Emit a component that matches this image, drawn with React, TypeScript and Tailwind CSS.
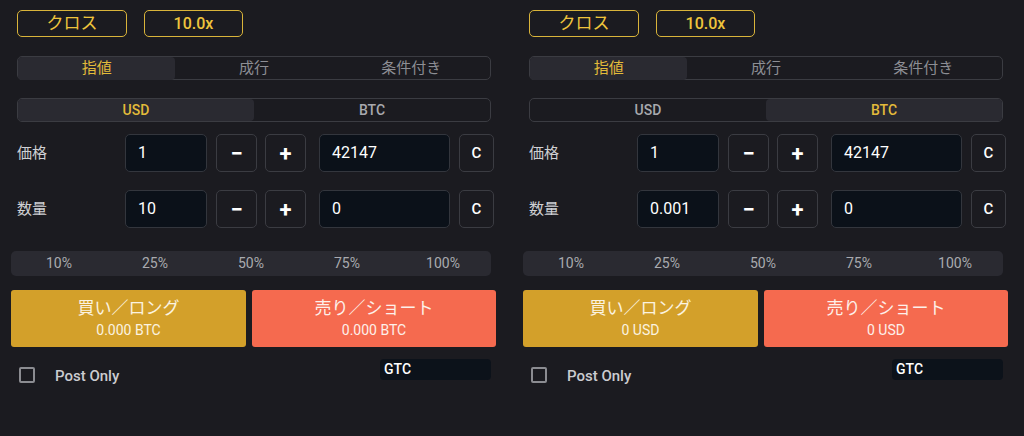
import React from "react";

const font = { fontFamily: '"Roboto", "Noto Sans CJK JP", sans-serif' };

type PanelProps = {
  currency: "USD" | "BTC";
  qty: string;
  amount: string;
};

const Box = ({ children, className = "" }: { children: React.ReactNode; className?: string }) => (
  <div className={`flex items-center justify-center rounded-[5px] border border-[#3b3c42] bg-[#1b1b20] text-white ${className}`}>
    {children}
  </div>
);

const Field = ({ value, className = "" }: { value: string; className?: string }) => (
  <div className={`flex h-[38px] items-center rounded-[5px] border border-[#33363d] bg-[#0b1119] pl-3 text-[16px] text-white ${className}`}>
    {value}
  </div>
);

const InputRow = ({ label, value, right }: { label: string; value: string; right: string }) => (
  <div className="flex h-[38px] items-center">
    <span className="w-[108px] text-[15px] text-[#cfd0d4]">{label}</span>
    <Field value={value} className="w-[82px]" />
    <Box className="ml-[9px] h-[38px] w-[41px] text-[22px] font-bold">−</Box>
    <Box className="ml-[8px] h-[38px] w-[41px] text-[22px] font-bold">+</Box>
    <Field value={right} className="ml-[13px] w-[131px]" />
    <Box className="ml-[9px] h-[38px] w-[35px] text-[15px] font-medium">C</Box>
  </div>
);

const Panel = ({ currency, qty, amount }: PanelProps) => (
  <div className="flex w-[512px] flex-col pt-[10px]">
    <div className="flex gap-[17px] pl-[17px]">
      <div className="flex h-[27px] w-[110px] items-center justify-center rounded-[5px] border-[1.5px] border-[#d9b43a] text-[17px] text-[#eec43c]">
        クロス
      </div>
      <div className="flex h-[27px] w-[99px] items-center justify-center rounded-[5px] border-[1.5px] border-[#d9b43a] text-[16px] font-medium text-[#eec43c]">
        10.0x
      </div>
    </div>

    <div className="ml-[17px] mt-[19px] grid h-[24px] w-[474px] grid-cols-3 rounded-[5px] border border-[#3b3c42] text-[15px]">
      <div className="flex items-center justify-center rounded-[4px] bg-[#2a2a31] text-[#e3bb3a]">指値</div>
      <div className="flex items-center justify-center text-[#8d8e94]">成行</div>
      <div className="flex items-center justify-center text-[#8d8e94]">条件付き</div>
    </div>

    <div className="ml-[17px] mt-[18px] grid h-[24px] w-[474px] grid-cols-2 rounded-[5px] border border-[#3b3c42] text-[14px] font-medium">
      <div className={`flex items-center justify-center rounded-[4px] ${currency === "USD" ? "bg-[#2a2a31] text-[#e3bb3a]" : "text-[#a8a9ae]"}`}>USD</div>
      <div className={`flex items-center justify-center rounded-[4px] ${currency === "BTC" ? "bg-[#2a2a31] text-[#e3bb3a]" : "text-[#a8a9ae]"}`}>BTC</div>
    </div>

    <div className="mt-[12px] flex flex-col gap-[18px] pl-[17px]">
      <InputRow label="価格" value="1" right="42147" />
      <InputRow label="数量" value={qty} right="0" />
    </div>

    <div className="ml-[11px] mt-[23px] grid h-[25px] w-[480px] grid-cols-5 rounded-[5px] bg-[#2a2a31] text-[14px] text-[#a9aaaf]">
      {["10%", "25%", "50%", "75%", "100%"].map((p) => (
        <div key={p} className="flex items-center justify-center">{p}</div>
      ))}
    </div>

    <div className="ml-[11px] mt-[14px] flex h-[57px] gap-[6px]">
      <div className="flex w-[235px] flex-col items-center justify-center rounded-[3px] bg-[#d3a02a] text-[#fbf3e0]">
        <span className="text-[17px] leading-[23px]">買い／ロング</span>
        <span className="text-[14px] leading-[20px]">{amount}</span>
      </div>
      <div className="flex w-[244px] flex-col items-center justify-center rounded-[3px] bg-[#f56a4f] text-[#fdf0ea]">
        <span className="text-[17px] leading-[23px]">売り／ショート</span>
        <span className="text-[14px] leading-[20px]">{amount}</span>
      </div>
    </div>

    <div className="mt-[12px] flex items-start pl-[19px]">
      <div className="mt-[8px] h-[16px] w-[16px] rounded-[2px] border-2 border-[#8b8c91]" />
      <span className="ml-[20px] mt-[6px] text-[15px] font-medium text-[#cbccd0]">Post Only</span>
      <div className="ml-auto mr-[21px] flex h-[21px] w-[111px] items-center rounded-[4px] bg-[#0c121a] pl-1 text-[14px] font-medium text-white">
        GTC
      </div>
    </div>
  </div>
);

export default function App() {
  return (
    <div className="flex h-[436px] w-[1024px] bg-[#1b1b20]" style={font}>
      <Panel currency="USD" qty="10" amount="0.000 BTC" />
      <Panel currency="BTC" qty="0.001" amount="0 USD" />
    </div>
  );
}
